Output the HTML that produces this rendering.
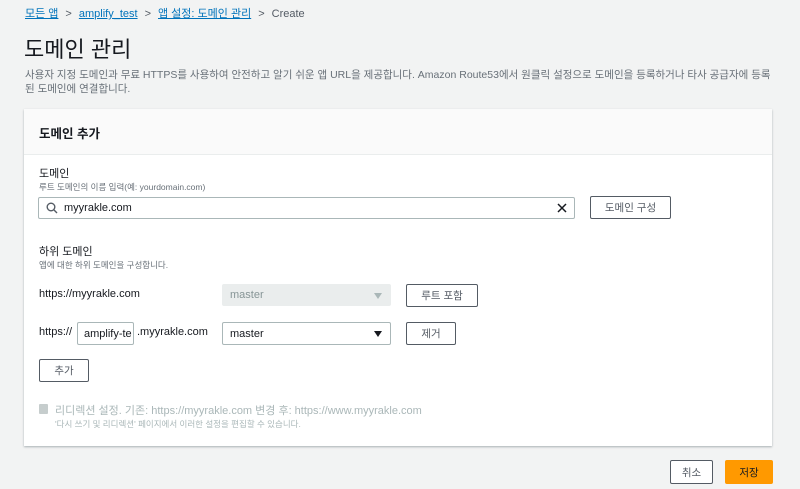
<!DOCTYPE html>
<html><head><meta charset="utf-8"><style>
*{box-sizing:border-box;margin:0;padding:0}
body{width:800px;height:489px;background:#f2f3f3;font-family:"Liberation Sans","Noto Sans CJK KR",sans-serif;color:#16191f;position:relative;overflow:hidden}
.a{position:absolute;white-space:nowrap}
.bc{top:5px;left:25px;font-size:11px;color:#16191f}
.bc a{color:#0073bb;text-decoration:underline}
.bc .s{color:#545b64;margin:0 7px;font-size:11px}
.t{top:32px;left:24px;font-size:22px;color:#16191f}
.d{left:25px;font-size:10.5px;color:#687078}
.card{position:absolute;left:24px;top:109px;width:748px;height:337px;background:#fff;box-shadow:0 1px 2px rgba(0,28,36,.3)}
.hd{position:absolute;left:0;top:0;width:100%;height:46px;background:#fafafa;border-bottom:1px solid #eaeded}
.btn{position:absolute;background:#fff;border:1px solid #545b64;border-radius:2px;font-size:10.5px;color:#545b64;display:flex;align-items:center;justify-content:center}
.inp{position:absolute;border:1px solid #aab7b8;border-radius:2px;background:#fff;font-size:11px;color:#16191f;display:flex;align-items:center}
.sel{position:absolute;border:1px solid #aab7b8;border-radius:2px;background:#fff;font-size:11px;display:flex;align-items:center;padding-left:7px}
.tri{position:absolute;right:8px;top:8px;width:0;height:0;border-left:4px solid transparent;border-right:4px solid transparent;border-top:6px solid #16191f}
.lbl{font-size:11px;color:#16191f}
.hint{font-size:8.5px;color:#687078}
</style></head><body>
<div class="a bc"><a>모든 앱</a><span class="s">&gt;</span><a>amplify_test</a><span class="s">&gt;</span><a>앱 설정: 도메인 관리</a><span class="s">&gt;</span><span style="color:#545b64">Create</span></div>
<div class="a t">도메인 관리</div>
<div class="a d" style="top:67px">사용자 지정 도메인과 무료 HTTPS를 사용하여 안전하고 알기 쉬운 앱 URL을 제공합니다. Amazon Route53에서 원클릭 설정으로 도메인을 등록하거나 타사 공급자에 등록</div>
<div class="a d" style="top:81px">된 도메인에 연결합니다.</div>
<div class="card"><div class="hd"></div></div>
<div class="a" style="top:123px;left:39px;font-size:12.5px;font-weight:bold">도메인 추가</div>
<div class="a lbl" style="top:165px;left:39px">도메인</div>
<div class="a hint" style="top:181px;left:39px">루트 도메인의 이름 입력(예: yourdomain.com)</div>
<div class="inp" style="left:38px;top:197px;width:537px;height:22px">
<svg width="12" height="12" viewBox="0 0 12 12" style="margin:0 6px 0 7px"><circle cx="5" cy="5" r="3.8" fill="none" stroke="#545b64" stroke-width="1.4"/><line x1="7.8" y1="7.8" x2="11" y2="11" stroke="#545b64" stroke-width="1.4"/></svg>myyrakle.com
<svg width="10" height="10" viewBox="0 0 10 10" style="position:absolute;right:7px;top:5px"><path d="M1 1L9 9M9 1L1 9" stroke="#16191f" stroke-width="1.5"/></svg></div>
<div class="btn" style="left:590px;top:196px;width:81px;height:23px">도메인 구성</div>
<div class="a lbl" style="top:243px;left:39px">하위 도메인</div>
<div class="a hint" style="top:259px;left:39px">앱에 대한 하위 도메인을 구성합니다.</div>
<div class="a lbl" style="top:288px;left:39px">https://myyrakle.com</div>
<div class="sel" style="left:222px;top:284px;width:169px;height:22px;background:#eaeded;border-color:#eaeded;color:#879596">master<div class="tri" style="border-top-color:#aab7b8"></div></div>
<div class="btn" style="left:406px;top:284px;width:72px;height:23px">루트 포함</div>
<div class="a lbl" style="top:326px;left:39px">https://</div>
<div class="inp" style="left:77px;top:322px;width:57px;height:23px;padding-left:6px;overflow:hidden">amplify-te</div>
<div class="a lbl" style="top:326px;left:137px">.myyrakle.com</div>
<div class="sel" style="left:222px;top:322px;width:169px;height:23px">master<div class="tri"></div></div>
<div class="btn" style="left:406px;top:322px;width:50px;height:23px">제거</div>
<div class="btn" style="left:39px;top:359px;width:50px;height:23px">추가</div>
<div class="a" style="left:39px;top:404px;width:9px;height:10px;background:#c6cdcd;border-radius:1px"></div>
<div class="a" style="left:55px;top:402px;font-size:11px;color:#aab7b8">리디렉션 설정. 기존: https://myyrakle.com 변경 후: https://www.myyrakle.com</div>
<div class="a" style="left:55px;top:418px;font-size:8.5px;color:#aab7b8">'다시 쓰기 및 리디렉션' 페이지에서 이러한 설정을 편집할 수 있습니다.</div>
<div class="btn" style="left:670px;top:460px;width:43px;height:24px;color:#545b64">취소</div>
<div class="btn" style="left:725px;top:460px;width:48px;height:24px;background:#ff9900;border-color:#ff9900;color:#16191f">저장</div>
</body></html>
